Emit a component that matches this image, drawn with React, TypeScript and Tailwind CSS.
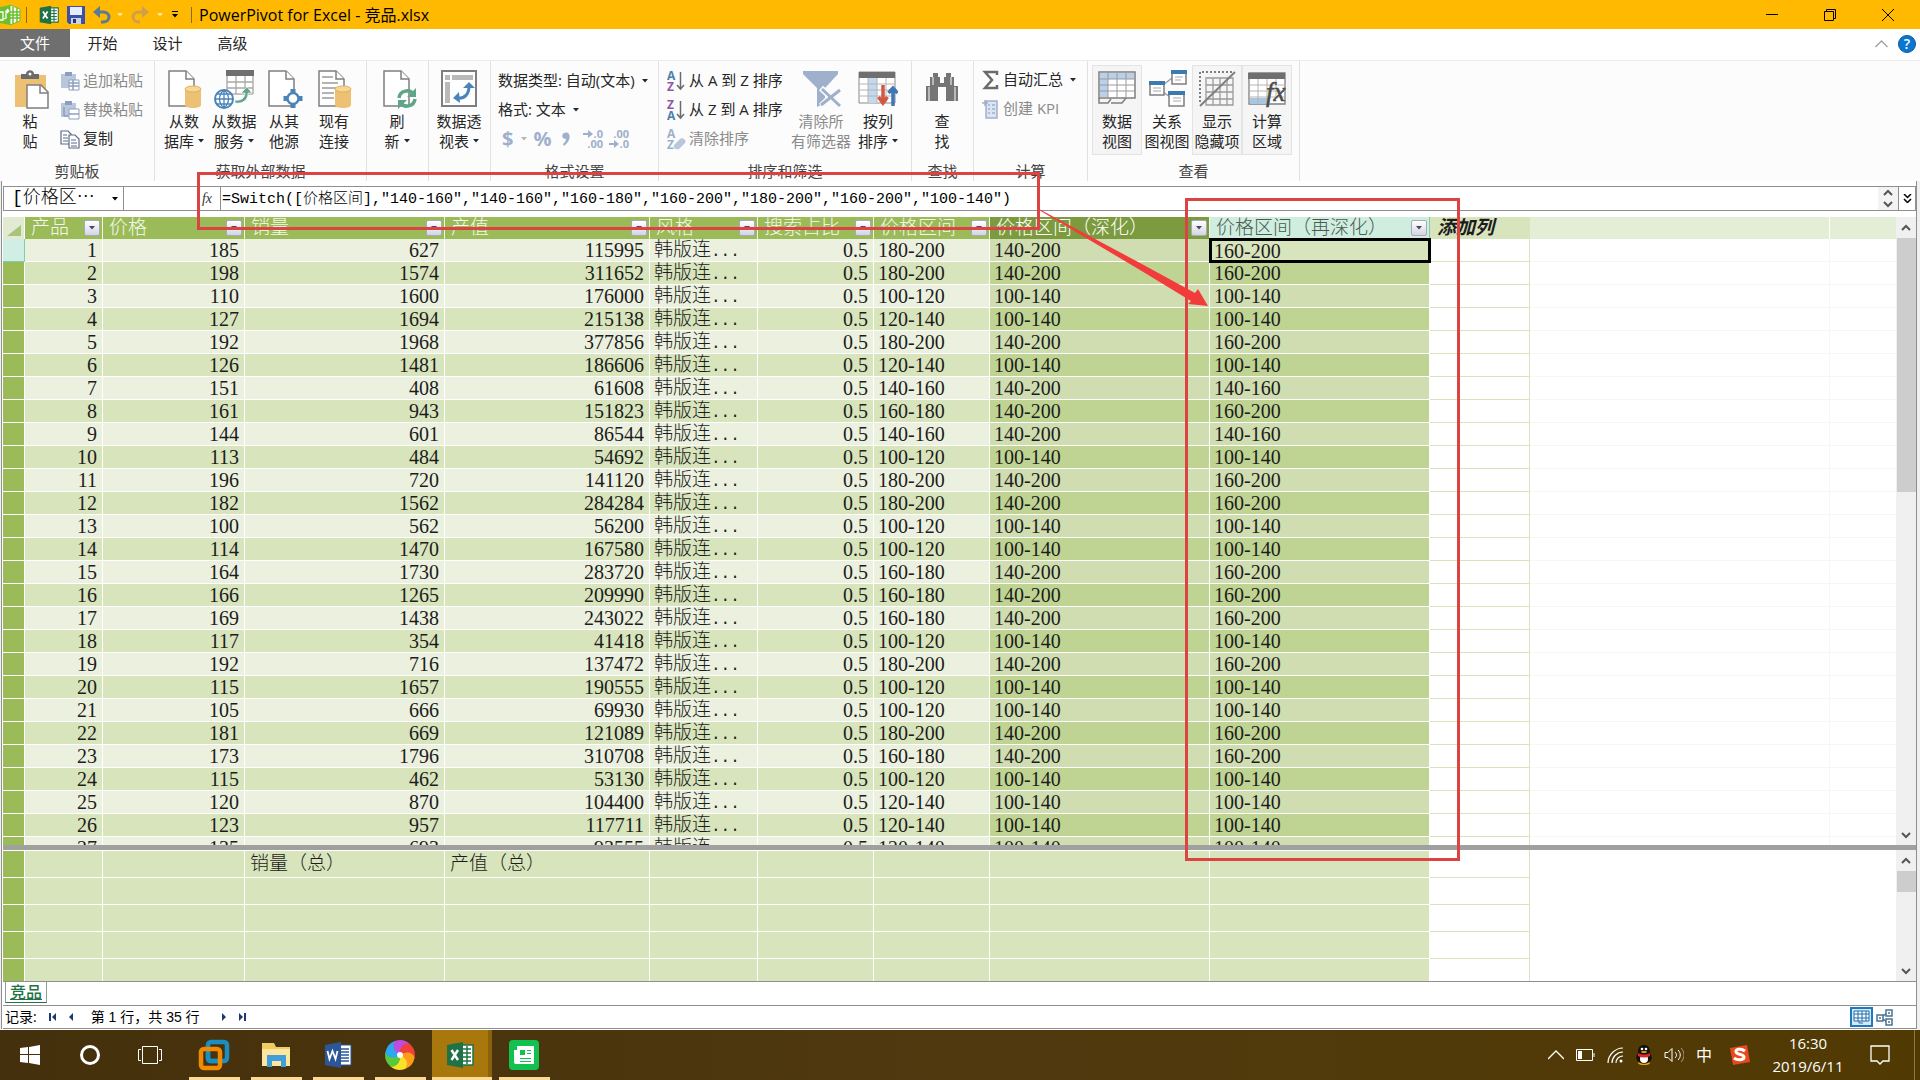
import type { ReactNode } from 'react';
import clsx from 'clsx';

type Row = [number, number, number, number, string, string, string];

// no, price, sales, output, price band, deep band, deeper band
const ROWS: Row[] = [
  [1, 185, 627, 115995, '180-200', '140-200', '160-200'],
  [2, 198, 1574, 311652, '180-200', '140-200', '160-200'],
  [3, 110, 1600, 176000, '100-120', '100-140', '100-140'],
  [4, 127, 1694, 215138, '120-140', '100-140', '100-140'],
  [5, 192, 1968, 377856, '180-200', '140-200', '160-200'],
  [6, 126, 1481, 186606, '120-140', '100-140', '100-140'],
  [7, 151, 408, 61608, '140-160', '140-200', '140-160'],
  [8, 161, 943, 151823, '160-180', '140-200', '160-200'],
  [9, 144, 601, 86544, '140-160', '140-200', '140-160'],
  [10, 113, 484, 54692, '100-120', '100-140', '100-140'],
  [11, 196, 720, 141120, '180-200', '140-200', '160-200'],
  [12, 182, 1562, 284284, '180-200', '140-200', '160-200'],
  [13, 100, 562, 56200, '100-120', '100-140', '100-140'],
  [14, 114, 1470, 167580, '100-120', '100-140', '100-140'],
  [15, 164, 1730, 283720, '160-180', '140-200', '160-200'],
  [16, 166, 1265, 209990, '160-180', '140-200', '160-200'],
  [17, 169, 1438, 243022, '160-180', '140-200', '160-200'],
  [18, 117, 354, 41418, '100-120', '100-140', '100-140'],
  [19, 192, 716, 137472, '180-200', '140-200', '160-200'],
  [20, 115, 1657, 190555, '100-120', '100-140', '100-140'],
  [21, 105, 666, 69930, '100-120', '100-140', '100-140'],
  [22, 181, 669, 121089, '180-200', '140-200', '160-200'],
  [23, 173, 1796, 310708, '160-180', '140-200', '160-200'],
  [24, 115, 462, 53130, '100-120', '100-140', '100-140'],
  [25, 120, 870, 104400, '120-140', '100-140', '100-140'],
  [26, 123, 957, 117711, '120-140', '100-140', '100-140'],
  [27, 135, 693, 93555, '120-140', '100-140', '100-140'],
];

const HEADERS = ['产品', '价格', '销量', '产值', '风格', '搜索占比', '价格区间', '价格区间（深化）', '价格区间（再深化）'];

const FORMULA = '=Switch([价格区间],"140-160","140-160","160-180","160-200","180-200","160-200","100-140")';

const UI_FONT = "font-['Open_Sans','Noto_Sans_CJK_SC',sans-serif]";
const GRID_FONT = "font-['Liberation_Serif','Noto_Sans_CJK_SC',serif]";
const MONO_FONT = "font-['Liberation_Mono','Noto_Sans_CJK_SC',monospace]";

function Columns() {
  return (
    <colgroup>
      <col className="w-[22px]" />
      <col className="w-[78px]" />
      <col className="w-[142px]" />
      <col className="w-[200px]" />
      <col className="w-[205px]" />
      <col className="w-[108px]" />
      <col className="w-[116px]" />
      <col className="w-[116px]" />
      <col className="w-[220px]" />
      <col className="w-[220px]" />
      <col className="w-[100px]" />
      <col className="w-[300px]" />
      <col />
    </colgroup>
  );
}

/* ---------- small glyphs ---------- */

function Caret({ className = 'text-gray-800' }: { className?: string }) {
  return (
    <svg width="6" height="4" viewBox="0 0 6 4" className={clsx('inline-block shrink-0', className)}>
      <path d="M0 0h6L3 3.5z" fill="currentColor" />
    </svg>
  );
}

function Chevron({ down = false, size = 10 }: { down?: boolean; size?: number }) {
  return (
    <svg width={size} height={size} viewBox="0 0 10 10" fill="none" stroke="#555" strokeWidth="2">
      <path d={down ? 'M1 3l4 4 4-4' : 'M1 7l4-4 4 4'} />
    </svg>
  );
}

function PageShape({ x = 4 }: { x?: number }) {
  return (
    <g transform={`translate(${x} 0)`} fill="#fff" stroke="#7f7f7f" strokeWidth="1.5">
      <path d="M1 1h17l8 8v27H1z" />
      <path d="M18 1v8h8" />
    </g>
  );
}

function Cylinder() {
  return (
    <g>
      <path d="M21 19v16c0 4 16 4 16 0V19z" fill="#edc173" />
      <ellipse cx="29" cy="19" rx="8" ry="3" fill="#f5d798" stroke="#e3b05a" />
    </g>
  );
}

function BigIcon({ children }: { children: ReactNode }) {
  return (
    <svg width="40" height="40" viewBox="0 0 40 40" fill="none">
      {children}
    </svg>
  );
}

const pasteIcon = (
  <BigIcon>
    <path d="M5 5h31v32H5z" fill="#edc173" />
    <path d="M11 9V4h5c0-5 8-5 8 0h5v5z" fill="#6b6b6b" />
    <circle cx="20" cy="4" r="1.5" fill="#fff" />
    <path d="M17 15h14l7 7v16H17z" fill="#fff" stroke="#7f7f7f" strokeWidth="1.5" />
    <path d="M30 15v8h8" stroke="#7f7f7f" strokeWidth="1.5" />
  </BigIcon>
);

const fromDbIcon = (
  <BigIcon>
    <PageShape />
    <Cylinder />
  </BigIcon>
);

const fromServiceIcon = (
  <BigIcon>
    <path d="M13 1h26v23H13z" fill="#fff" stroke="#8a8a8a" />
    <path d="M12 0h28v6H12z" fill="#6f6f6f" />
    <path d="M13 12h26M13 18h26M22 6v18M31 6v18" stroke="#a9a9a9" strokeWidth="1.3" />
    <circle cx="10" cy="29" r="9" fill="#fff" stroke="#4b84b8" strokeWidth="2" />
    <path d="M1 29h18M10 20v18M3 24h14M3 34h14M10 20c-6 5-6 13 0 18M10 20c6 5 6 13 0 18" stroke="#4b84b8" strokeWidth="1.3" />
    <path d="M21 30c6 1 10-2 10-7h-4l6-6 5 6h-4c0 7-5 11-13 10z" fill="#5fa587" stroke="#fff" strokeWidth=".6" />
  </BigIcon>
);

const fromOtherIcon = (
  <BigIcon>
    <PageShape />
    <path d="M29 19v19M19.500 28.500h19" stroke="#4b84b8" strokeWidth="5" />
    <circle cx="29" cy="28.500" r="5.500" fill="#fff" stroke="#4b84b8" strokeWidth="2.500" />
  </BigIcon>
);

const existingIcon = (
  <BigIcon>
    <PageShape />
    <path d="M8 7h11M8 13h16M8 18h14M8 23h12M8 28h12" stroke="#9b9b9b" strokeWidth="1.500" />
    <Cylinder />
  </BigIcon>
);

const refreshIcon = (
  <BigIcon>
    <PageShape x={6} />
    <path d="M22 28c1-8 11-9 14-4M38 29c-1 8-11 9-14 4" stroke="#5fa587" strokeWidth="3.500" />
    <path d="M39 18v9h-9zM21 39v-9h9z" fill="#5fa587" />
  </BigIcon>
);

const pivotIcon = (
  <BigIcon>
    <path d="M3 1h34v35H3z" fill="#fff" stroke="#7f7f7f" strokeWidth="2" />
    <path d="M6 5h5v5H6zM13 5h21v5H13zM6 12h5v21H6z" fill="#b9b9b9" />
    <path d="M18 28c8 1 12-4 12-12" stroke="#4b84b8" strokeWidth="3" />
    <path d="M24 18l6-6 6 6zM20 22l-6 6 7 5z" fill="#4b84b8" />
  </BigIcon>
);

const clearFilterIcon = (
  <BigIcon>
    <path d="M2 1h35v3L24 18v15l-8 4V18L2 4z" fill="#9fb0cd" />
    <path d="M20 18l18 17M38 19L20 36" stroke="#fcfcfc" strokeWidth="6" />
    <path d="M21 19l18 17M39 20L20 35" stroke="#9fb0cd" strokeWidth="3" />
  </BigIcon>
);

const sortColumnIcon = (
  <BigIcon>
    <path d="M1 2h36v31H1z" fill="#fff" stroke="#8a8a8a" />
    <path d="M10 8h9v25h-9z" fill="#c5d9ee" />
    <path d="M1 2h36v6H1z" fill="#6f6f6f" />
    <path d="M1 14h36M1 20h36M1 26h36M10 8v25M19 8v25M28 8v25" stroke="#b4b4b4" />
    <path d="M25 15v16M20.500 27l4.500 6 4.500-6" stroke="#d35640" strokeWidth="3.500" />
    <path d="M35 36V20M30.500 23l4.500-5 4.500 5" stroke="#3f77b5" strokeWidth="3.500" />
  </BigIcon>
);

const findIcon = (
  <BigIcon>
    <path d="M11 3h5v4h2v6h4V7h2V3h5v4h3v9h4v15H24V17h-8v14H4V16h4V7h3z" fill="#757575" />
    <path d="M7 17v14M11 7v8M33 17v14M29 7v8" stroke="#fff" />
  </BigIcon>
);

const dataViewIcon = (
  <BigIcon>
    <path d="M2 2h36v26H2z" fill="#fff" stroke="#7f7f7f" strokeWidth="1.500" />
    <path d="M3 3h34v6H3zM3 9h8v18H3z" fill="#b9cfea" />
    <path d="M2 9h36M2 15h36M2 21h36M11 2v26M20 2v26M29 2v26" stroke="#9b9b9b" />
    <path d="M2 28v5h9l3-4M14 33h11l4-5" stroke="#7f7f7f" strokeWidth="1.500" />
  </BigIcon>
);

const diagramIcon = (
  <BigIcon>
    <path d="M16 15l9-7M16 22l7 5" stroke="#9b9b9b" strokeWidth="1.500" />
    <path d="M3 12h14v13H3zM25 1h14v13H25zM22 22h15v14H22z" fill="#fff" stroke="#7f7f7f" strokeWidth="1.500" />
    <path d="M2 11h16v4H2zM24 0h16v4H24zM21 21h17v4H21z" fill="#3d7ab0" />
    <path d="M6 18h8M6 21h8M28 7h8M28 10h6M26 28h8M26 31h8" stroke="#a9a9a9" />
  </BigIcon>
);

const hiddenIcon = (
  <BigIcon>
    <path d="M3 32V2h34" stroke="#7f7f7f" strokeWidth="2" strokeDasharray="2 2" />
    <path d="M9 8h27v27H9zM9 15h27M9 22h27M9 29h27M16 8v27M23 8v27M30 8v27" stroke="#9b9b9b" strokeWidth="1.300" />
    <path d="M3 36L38 2" stroke="#7f7f7f" strokeWidth="2" />
  </BigIcon>
);

const calcAreaIcon = (
  <BigIcon>
    <path d="M2 3h36v31H2z" fill="#fff" stroke="#7f7f7f" strokeWidth="1.300" />
    <path d="M3 28h20v6H3z" fill="#a8c6e2" />
    <path d="M1 3h37v6H1z" fill="#6f6f6f" />
    <path d="M2 15h36M2 21h36M2 27h36M11 9v25M20 9v25M29 9v18" stroke="#b4b4b4" />
    <text x="19" y="31" fontSize="27" fontStyle="italic" fontFamily="Liberation Serif" fill="#4b4b4b" stroke="#4b4b4b" strokeWidth=".5">fx</text>
  </BigIcon>
);

function SmallPaste({ replace = false }: { replace?: boolean }) {
  return (
    <svg width="20" height="20" viewBox="0 0 20 20" fill="none">
      <path d="M1 3h15v14H1z" fill="#b9c6dc" />
      <path d="M5 1h7v4H5z" fill="#8e9fbd" />
      <path d="M9 9h10v10H9z" fill="#fff" stroke="#8e9fbd" />
      <path d={replace ? 'M4 7v9M4 16h4M9 14h10' : 'M9 12h10M9 15h10M13 9v10'} stroke="#8e9fbd" strokeWidth="1.500" />
    </svg>
  );
}

function CopyIcon() {
  return (
    <svg width="20" height="20" viewBox="0 0 20 20" fill="#fff" stroke="#5b6b85" strokeWidth="1.200">
      <path d="M1 2h7l3 3v10H1z" />
      <path d="M9 6h6l4 4v9H9z" />
      <path d="M3 6h4M3 9h5M3 12h5M11 11h5M11 14h6M11 17h6" />
    </svg>
  );
}

function SortIcon({ top, bottom, muted = false }: { top: string; bottom: string; muted?: boolean }) {
  return (
    <svg width="20" height="22" viewBox="0 0 20 22" fill="none" className="overflow-visible">
      <g fontFamily="Open Sans" fontSize="12" fontWeight="700">
        <text x="1" y="10" fill={muted ? '#9fb0cd' : top === 'A' ? '#4b7fae' : '#8d5aa5'}>{top}</text>
        <text x="1" y="21" fill={muted ? '#9fb0cd' : bottom === 'A' ? '#4b7fae' : '#8d5aa5'}>{bottom}</text>
      </g>
      {muted ? (
        <path d="M8 17l6-6c2-2 7 1 5 4l-6 6c-3 1-6-1-5-4z" fill="#b9c6dc" />
      ) : (
        <path d="M14.500 2v16M11 15l3.500 4 3.500-4" stroke="#6b6b6b" strokeWidth="1.500" />
      )}
    </svg>
  );
}

/* ---------- ribbon ---------- */

interface BigButtonProps {
  icon: ReactNode;
  lines: [string, string];
  caret?: boolean;
  pressed?: boolean;
  muted?: boolean;
  width?: string;
}

function BigButton({ icon, lines, caret, pressed, muted, width = 'w-[50px]' }: BigButtonProps) {
  return (
    <button
      type="button"
      className={clsx(
        'flex h-[90px] shrink-0 flex-col items-center border pt-1 whitespace-nowrap',
        width,
        pressed ? 'border-[#e3e3e3] bg-[#f5f5f5]' : 'border-transparent',
        muted ? 'text-[#8a8a8a]' : 'text-[#262626]'
      )}
    >
      {icon}
      <span className="mt-px leading-5">{lines[0]}</span>
      <span className="flex items-center gap-1 leading-5">
        {lines[1]}
        {caret && <Caret />}
      </span>
    </button>
  );
}

function Group({ label, width, inset, children }: { label: string; width: string; inset?: boolean; children: ReactNode }) {
  return (
    <section className={clsx('flex shrink-0 flex-col border-r border-[#e1e1e1] pt-1', width)}>
      <div className={clsx('flex h-[96px]', inset && 'pl-1')}>{children}</div>
      <div className="text-center leading-5 text-[#444]">{label}</div>
    </section>
  );
}

function SmallButton({ icon, text, muted, caret }: { icon?: ReactNode; text: string; muted?: boolean; caret?: boolean }) {
  return (
    <button type="button" className={clsx('flex h-[29px] items-center gap-[3px] whitespace-nowrap', muted ? 'text-[#8a8a8a]' : 'text-[#262626]')}>
      {icon}
      {text}
      {caret && <Caret className="ml-1 text-gray-800" />}
    </button>
  );
}

function DecimalIcon({ increase = false }: { increase?: boolean }) {
  return (
    <svg width="20" height="20" viewBox="0 0 20 20" fill="#9fb0cd" fontSize="11" fontFamily="Open Sans" fontWeight="700" className="overflow-visible">
      <text x="20" y="9" textAnchor="end">{increase ? '.00' : '.0'}</text>
      <text x="20" y="19" textAnchor="end">{increase ? '.0' : '.00'}</text>
      <path d={increase ? 'M0 14h5v-3l5 4-5 4v-3H0z' : 'M0 4h5V1l5 4-5 4V6H0z'} />
    </svg>
  );
}

function Ribbon() {
  return (
    <div className="flex h-[121px] overflow-hidden border-t border-[#ececec] bg-[#fcfcfc] text-[15px]">
      <Group label="剪贴板" width="w-[155px]">
        <BigButton icon={pasteIcon} lines={['粘', '贴']} width="w-[60px]" />
        <div className="flex flex-col pt-px">
          <SmallButton icon={<SmallPaste />} text="追加粘贴" muted />
          <SmallButton icon={<SmallPaste replace />} text="替换粘贴" muted />
          <SmallButton icon={<CopyIcon />} text="复制" />
        </div>
      </Group>
      <Group label="获取外部数据" width="w-[212px]" inset>
        <BigButton icon={fromDbIcon} lines={['从数', '据库']} caret />
        <BigButton icon={fromServiceIcon} lines={['从数据', '服务']} caret />
        <BigButton icon={fromOtherIcon} lines={['从其', '他源']} />
        <BigButton icon={existingIcon} lines={['现有', '连接']} />
      </Group>
      <Group label="" width="w-[62px]">
        <BigButton icon={refreshIcon} lines={['刷', '新']} caret width="w-[60px]" />
      </Group>
      <Group label="" width="w-[62px]">
        <BigButton icon={pivotIcon} lines={['数据透', '视表']} caret width="w-[60px]" />
      </Group>
      <Group label="格式设置" width="w-[168px]">
        <div className="flex flex-col items-start pt-px pl-[7px]">
          <SmallButton text="数据类型: 自动(文本)" caret />
          <SmallButton text="格式: 文本" caret />
          <div className="flex h-[29px] items-center gap-[6px] pl-1 font-bold text-[#9fb0cd]">
            <button type="button" aria-label="货币" className="flex items-center gap-2 text-xl leading-6">
              $<Caret className="text-[#b5b5b5]" />
            </button>
            <button type="button" aria-label="百分比" className="text-xl leading-6">%</button>
            <button type="button" aria-label="千位分隔" className="w-5">
              <svg width="20" height="20" viewBox="0 0 20 20">
                <path d="M7 4c6-3 9 6 0 13l-1-2c2-2 3-3 3-5-4 0-5-4-2-6z" fill="#9fb0cd" />
              </svg>
            </button>
            <button type="button" aria-label="增加小数位数" className="w-5">
              <DecimalIcon />
            </button>
            <button type="button" aria-label="减少小数位数" className="w-5">
              <DecimalIcon increase />
            </button>
          </div>
        </div>
      </Group>
      <Group label="排序和筛选" width="w-[253px]">
        <div className="flex w-[130px] shrink-0 flex-col items-start pt-px pl-[7px]">
          <SmallButton icon={<SortIcon top="A" bottom="Z" />} text="从 A 到 Z 排序" />
          <SmallButton icon={<SortIcon top="Z" bottom="A" />} text="从 Z 到 A 排序" />
          <SmallButton icon={<SortIcon top="A" bottom="Z" muted />} text="清除排序" muted />
        </div>
        <BigButton icon={clearFilterIcon} lines={['清除所', '有筛选器']} muted width="w-[64px]" />
        <BigButton icon={sortColumnIcon} lines={['按列', '排序']} caret />
      </Group>
      <Group label="查找" width="w-[62px]">
        <BigButton icon={findIcon} lines={['查', '找']} width="w-[60px]" />
      </Group>
      <Group label="计算" width="w-[114px]">
        <div className="flex flex-col items-start pl-2">
          <SmallButton
            icon={
              <svg width="18" height="20" viewBox="0 0 18 20" fill="none" stroke="#6b6b6b" strokeWidth="2.500">
                <path d="M15 5V2H3l7 8-7 8h12v-3" />
              </svg>
            }
            text="自动汇总"
            caret
          />
          <SmallButton
            icon={
              <svg width="18" height="20" viewBox="0 0 18 20" fill="none" stroke="#9fb0cd" strokeWidth="1.500">
                <path d="M4 2h11v17H4z" fill="#dbe4f1" />
                <path d="M10 6h3M10 10h3M10 14h3M6 6h2M6 10h2M6 14h2M0 4h6M3 1v6" />
              </svg>
            }
            text="创建 KPI"
            muted
          />
        </div>
      </Group>
      <Group label="查看" width="w-[212px]" inset>
        <BigButton icon={dataViewIcon} lines={['数据', '视图']} pressed />
        <BigButton icon={diagramIcon} lines={['关系', '图视图']} />
        <BigButton icon={hiddenIcon} lines={['显示', '隐藏项']} pressed />
        <BigButton icon={calcAreaIcon} lines={['计算', '区域']} pressed />
      </Group>
    </div>
  );
}

/* ---------- title bar and tabs ---------- */

function ExcelMark({ size }: { size: number }) {
  return (
    <svg width={size} height={size} viewBox="0 0 28 28">
      <path d="M14 4h13v20H14z" fill="#fff" stroke="#1f7246" strokeWidth="1.500" />
      <path d="M17 8h8M17 12h8M17 16h8M17 20h8M21 5v18" stroke="#1f7246" strokeWidth="1.500" />
      <path d="M1 4l16-3v26L1 24z" fill="#1f7246" />
      <path d="M5.500 9l6.500 10M12 9L5.500 19" stroke="#fff" strokeWidth="2.400" />
    </svg>
  );
}

function TitleBar() {
  return (
    <header className="flex h-[29px] shrink-0 items-center bg-[#ffb900] text-black">
      <svg width="21" height="22" viewBox="0 0 21 22" fill="none">
        <path d="M0 3l10-2v20L0 19z" fill="#6cbf2e" />
        <path d="M10 1l10 4v12l-10 4z" fill="#fff" stroke="#6cbf2e" />
        <path d="M10 8h10M10 11h10M10 14h10M13 3v17M17 4v14" stroke="#6cbf2e" strokeWidth="1.500" />
        <path d="M0 8h3v8H0M9 7H6v7l-2 1M9 7L7 5M9 7L7 9" stroke="#fff" strokeWidth="1.300" />
      </svg>
      <span className="ml-[5px] h-4 w-px bg-[#8a6a1c]" />
      <div className="ml-3 flex items-center">
        <ExcelMark size={20} />
        <button type="button" aria-label="保存" className="ml-2">
          <svg width="18" height="18" viewBox="0 0 18 18">
            <path d="M0 0h18v18H2l-2-2z" fill="#3c50a8" />
            <path d="M3 1h12v8H3z" fill="#e6edf9" />
            <path d="M4 12h10v6H4z" fill="#cbd2e2" />
            <path d="M6 13h3v4H6z" fill="#26346f" />
          </svg>
        </button>
        <button type="button" aria-label="撤消" className="ml-2 flex items-center gap-[6px]">
          <svg width="18" height="18" viewBox="0 0 18 18" fill="none">
            <path d="M3 6h7c8 0 8 10 0 10H8" stroke="#5b7a94" strokeWidth="3" />
            <path d="M0 6l7-6v12z" fill="#5b7a94" />
          </svg>
          <Caret className="text-[#ffe7a3]" />
        </button>
        <button type="button" aria-label="恢复" className="ml-2 flex items-center gap-2">
          <svg width="18" height="18" viewBox="0 0 18 18" fill="none">
            <path d="M15 6H8c-8 0-8 10 0 10h1" stroke="#cfa04a" strokeWidth="3" />
            <path d="M18 6l-7-6v12z" fill="#cfa04a" />
          </svg>
          <Caret className="text-[#ffe7a3]" />
        </button>
        <button type="button" aria-label="自定义快速访问工具栏" className="ml-1 flex w-4 flex-col items-center gap-[2px]">
          <span className="h-px w-[6px] bg-black" />
          <Caret className="text-black" />
        </button>
      </div>
      <span className="ml-2 h-4 w-px bg-[#8a6a1c]" />
      <h1 className="ml-[7px] text-base leading-6">PowerPivot for Excel - 竞品.xlsx</h1>
      <div className="ml-auto flex pr-[3px]">
        <button type="button" aria-label="最小化" className="flex h-7 w-[58px] items-center justify-center">
          <span className="h-px w-3 bg-black" />
        </button>
        <button type="button" aria-label="还原" className="flex h-7 w-[58px] items-center justify-center">
          <svg width="12" height="12" viewBox="0 0 12 12" fill="none" stroke="#000">
            <path d="M.5 2.500h9v9h-9zM2.500 2.500v-2h9v9h-2" />
          </svg>
        </button>
        <button type="button" aria-label="关闭" className="flex h-7 w-[58px] items-center justify-center">
          <svg width="12" height="12" viewBox="0 0 12 12" stroke="#000">
            <path d="M0 0l12 12M12 0L0 12" />
          </svg>
        </button>
      </div>
    </header>
  );
}

function TabBar() {
  return (
    <nav className="flex h-[31px] shrink-0 items-start bg-white text-[15px] leading-7 text-[#262626]">
      <button type="button" className="h-7 w-[70px] bg-[#6f6f6f] text-white">文件</button>
      {['开始', '设计', '高级'].map((tab) => (
        <button key={tab} type="button" className="h-8 w-[65px] pb-1">{tab}</button>
      ))}
      <div className="mt-[6px] ml-auto flex items-center gap-[10px] pr-1">
        <svg width="13" height="8" viewBox="0 0 13 8" fill="none" stroke="#a0a0a0" strokeWidth="1.300">
          <path d="M.5 7l6-6 6 6" />
        </svg>
        <button type="button" aria-label="帮助" className="size-[18px] rounded-full border border-[#0a5aa6] bg-[#0b76d1] text-sm leading-4 font-semibold text-white">
          ?
        </button>
      </div>
    </nav>
  );
}

function FormulaBar() {
  return (
    <div className="mt-[5px] flex h-[25px] shrink-0 items-stretch border border-[#8f8f8f] bg-white text-[15px]">
      <select
        aria-label="名称"
        className={clsx('w-[120px] appearance-none border-r border-[#8f8f8f] bg-white pl-2 text-[18px] leading-[23px] font-light', MONO_FONT)}
      >
        <option>[价格区⋯</option>
      </select>
      <span className="-ml-3 flex items-center">
        <Caret className="text-black" />
      </span>
      <span className="ml-[6px] flex w-[97px] items-center justify-end border-r border-[#8f8f8f] pr-2 font-['Liberation_Serif',serif] text-sm text-[#333] italic">
        fx
      </span>
      <input
        aria-label="公式"
        defaultValue={FORMULA}
        spellCheck={false}
        className={clsx('min-w-0 flex-1 pt-[2px] pl-px leading-[21px] font-light text-black outline-none', MONO_FONT)}
      />
      <div className="flex w-5 flex-col items-center justify-between bg-[#f3f3f3] py-px">
        <Chevron />
        <Chevron down />
      </div>
      <button type="button" aria-label="展开" className="flex w-[17px] flex-col items-center justify-center border-l border-[#8f8f8f]">
        <svg width="9" height="9" viewBox="0 0 9 9" fill="none" stroke="#000" strokeWidth="1.500">
          <path d="M1 0l3.500 3.500L8 0M1 5l3.500 3.500L8 5" />
        </svg>
      </button>
    </div>
  );
}

/* ---------- grid ---------- */

function ScrollBar({ thumb }: { thumb: string }) {
  return (
    <div className="flex w-5 shrink-0 flex-col items-center bg-[#f0f0f0]">
      <div className="flex h-[21px] shrink-0 items-center"><Chevron /></div>
      <div className={clsx('w-[19px] bg-[#cdcdcd]', thumb)} />
      <div className="mt-auto flex h-[21px] shrink-0 items-center"><Chevron down /></div>
    </div>
  );
}

function HeaderCell({ title, index }: { title: string; index: number }) {
  return (
    <th
      className={clsx(
        'h-[22px] border-r p-0 text-left font-light',
        index === 7 && 'border-[#f1f6e8] bg-[#7c9b3e] text-white',
        index === 8 && 'border-[#7ccfa6] bg-[#d0eee0] text-[#4a5a50]',
        index < 7 && 'border-[#f1f6e8] bg-[#9bbb59] text-[#f4f9ea]'
      )}
    >
      <div className="flex h-[22px] items-center justify-between pr-[2px] pl-[6px]">
        <span className="text-[19px] leading-[22px]">{title}</span>
        <button
          type="button"
          aria-label={`筛选 ${title}`}
          className="flex size-4 shrink-0 items-center justify-center rounded-xs border border-[#a9a9bd] bg-linear-to-b from-white to-[#d5d5e0]"
        >
          <Caret className="text-[#474769]" />
        </button>
      </div>
    </th>
  );
}

function DataGrid() {
  return (
    <div className="mt-[6px] flex min-h-0 flex-1">
      <div className="min-w-0 flex-1 overflow-hidden">
        <table className={clsx('w-full table-fixed border-separate border-spacing-0 text-[20px] text-[#1c1c1c]', GRID_FONT)}>
          <Columns />
          <thead>
            <tr className="h-[22px]">
              <th className="border-r border-white bg-[#e3ead3] p-0" aria-label="全选">
                <svg width="21" height="21" viewBox="0 0 21 21">
                  <path d="M18 7v11H4z" fill="#a9c37a" />
                </svg>
              </th>
              {HEADERS.map((title, i) => (
                <HeaderCell key={title} title={title} index={i} />
              ))}
              <th className="bg-[#d8e4bc] p-0 pl-[7px] text-left text-[19px] leading-[22px] font-bold italic">添加列</th>
              <th className="border-r border-white bg-[#e4edd5] p-0" />
              <th className="bg-[#e4edd5] p-0" />
            </tr>
          </thead>
          <tbody>
            {ROWS.map((row, r) => {
              const [no, price, sales, output, band, deep, deeper] = row;
              const even = r % 2 === 1;
              const plain = clsx('h-[23px] border-r border-b border-white p-0 leading-[22px] whitespace-nowrap', even ? 'bg-[#d8e4bc]' : 'bg-[#ebf1de]');
              const calc = clsx('border-r border-b border-white p-0 pl-1 leading-[22px]', even ? 'bg-[#bfd492]' : 'bg-[#cfddb0]');
              return (
                <tr key={no} className="h-[23px]">
                  <td
                    className={clsx(
                      'border-r border-b p-0',
                      r === 0 ? 'border-[#7ccfa6] bg-[#d0eee3]' : 'border-white bg-[#9bbb59]'
                    )}
                  />
                  {[no, price, sales, output].map((value, i) => (
                    <td key={i} className={clsx(plain, 'pr-[5px] text-right')}>{value}</td>
                  ))}
                  <td className={clsx(plain, 'pl-1 text-[19px] font-light')}>
                    韩版连<span className={clsx('text-base leading-none', MONO_FONT)}>...</span>
                  </td>
                  <td className={clsx(plain, 'pr-[5px] text-right')}>0.5</td>
                  <td className={clsx(plain, 'pl-1')}>{band}</td>
                  <td className={calc}>{deep}</td>
                  <td
                    className={
                      r === 0
                        ? 'bg-[#d8e4bc] p-0 pl-1 leading-[22px] outline-[3px] -outline-offset-2 outline-black'
                        : calc
                    }
                  >
                    {deeper}
                  </td>
                  <td className="border-r border-b border-[#d8e4bc] bg-white p-0" />
                  <td className="border-r border-b border-[#f5f7f1] bg-white p-0" />
                  <td className="border-b border-[#f5f7f1] bg-white p-0" />
                </tr>
              );
            })}
          </tbody>
        </table>
      </div>
      <ScrollBar thumb="h-[254px]" />
    </div>
  );
}

function CalculationArea() {
  const totals: Record<number, string> = { 2: '销量（总）', 3: '产值（总）' };
  return (
    <div className="flex h-[131px] shrink-0">
      <div className="min-w-0 flex-1 overflow-hidden">
        <table className={clsx('w-full table-fixed border-separate border-spacing-0 text-[19px] text-[#1c1c1c]', GRID_FONT)}>
          <Columns />
          <tbody>
            {[0, 1, 2, 3, 4].map((r) => (
              <tr key={r} className="h-[27px]">
                <td className="border-t border-r border-white bg-[#9bbb59] p-0" />
                {HEADERS.map((title, i) => (
                  <td key={title} className="h-[27px] border-t border-r border-white bg-[#d8e4bc] p-0 pl-[5px] text-left leading-[26px] font-light">
                    {r === 0 ? totals[i] : ''}
                  </td>
                ))}
                <td className={clsx('border-r border-[#d8e4bc] p-0', r > 0 && 'border-t')} />
                <td />
                <td />
              </tr>
            ))}
          </tbody>
        </table>
      </div>
      <ScrollBar thumb="h-[21px]" />
    </div>
  );
}

function StatusArea() {
  return (
    <footer className="shrink-0 bg-white text-sm">
      <div className="h-6 border-t border-[#8f8f8f] pl-[2px]">
        <button type="button" className="block h-[21px] border border-t-0 border-[#8f9f97] border-b-[#1f7246] px-1 text-base leading-[21px] font-medium text-[#1f7246] underline">
          竞品
        </button>
      </div>
      <div className="flex h-6 items-center border-y border-[#8f8f8f] pl-[2px] text-black">
        <span>记录:</span>
        <div className="ml-3 flex gap-[10px] text-[#1c3a70]">
          <button type="button" aria-label="第一条">
            <svg width="8" height="8" viewBox="0 0 8 8" fill="currentColor"><path d="M0 0h2v8H0zM7 0v8L3 4z" /></svg>
          </button>
          <button type="button" aria-label="上一条">
            <svg width="8" height="8" viewBox="0 0 8 8" fill="currentColor"><path d="M6 0v8L2 4z" /></svg>
          </button>
        </div>
        <span className="mx-4 whitespace-nowrap font-['Liberation_Sans','Noto_Sans_CJK_SC',sans-serif]">第 1 行，共 35 行</span>
        <div className="ml-1 flex gap-[10px] text-[#1c3a70]">
          <button type="button" aria-label="下一条">
            <svg width="8" height="8" viewBox="0 0 8 8" fill="currentColor"><path d="M2 0v8l4-4z" /></svg>
          </button>
          <button type="button" aria-label="最后一条">
            <svg width="8" height="8" viewBox="0 0 8 8" fill="currentColor"><path d="M6 0h2v8H6zM1 0v8l4-4z" /></svg>
          </button>
        </div>
        <div className="ml-auto flex items-center gap-[3px] pr-[23px]">
          <button type="button" aria-label="数据视图" className="flex h-5 w-[23px] items-center justify-center border-2 border-[#1c7bc0] bg-[#d6e8f5]">
            <svg width="17" height="14" viewBox="0 0 17 14" fill="#fff" stroke="#1c6ca8">
              <path d="M1 1h15v10H1zM1 4h15M1 8h15M5 1v10M9 1v10M13 1v10M6 11v2h4" />
            </svg>
          </button>
          <button type="button" aria-label="关系图视图">
            <svg width="17" height="17" viewBox="0 0 17 17" fill="#fff" stroke="#4a7291" strokeWidth="1.500">
              <path d="M7 7l4-3M7 10l4 3" />
              <path d="M1 6h6v6H1zM10 1h6v6h-6zM10 10h6v6h-6zM3 9h2M12 4h2M12 13h2" />
            </svg>
          </button>
        </div>
      </div>
    </footer>
  );
}

/* ---------- taskbar ---------- */

const taskIcons: { name: string; icon: ReactNode; active?: boolean }[] = [
  {
    name: 'VMware',
    icon: (
      <svg width="32" height="32" viewBox="0 0 32 32" fill="none" strokeWidth="4.500">
        <rect x="10" y="3" width="19" height="19" rx="3" stroke="#1a8fc4" />
        <rect x="3" y="10" width="19" height="19" rx="3" stroke="#f08a00" />
        <path d="M10 13v6c0 2 1 3 3 3h6" stroke="#1a8fc4" />
      </svg>
    ),
  },
  {
    name: '文件资源管理器',
    icon: (
      <svg width="30" height="28" viewBox="0 0 30 28">
        <path d="M1 2h12l2 4h14v18H1z" fill="#f0cd62" />
        <path d="M1 8h28v17H1z" fill="#fde6a0" />
        <path d="M6 14h19v12h-5v-6h-9v6H6z" fill="#3f9fd8" />
      </svg>
    ),
  },
  {
    name: 'Word',
    icon: (
      <svg width="28" height="28" viewBox="0 0 28 28">
        <path d="M14 4h13v20H14z" fill="#fff" stroke="#2b579a" />
        <path d="M17 8h8M17 11h8M17 14h8M17 17h8M17 20h8" stroke="#2b579a" strokeWidth="1.500" />
        <path d="M1 4l16-3v26L1 24z" fill="#2b579a" />
        <path d="M3.500 10l2 8 3-8 3 8 2-8" fill="none" stroke="#fff" strokeWidth="1.800" />
      </svg>
    ),
  },
  {
    name: '浏览器',
    icon: (
      <svg width="32" height="32" viewBox="-16 -16 32 32">
        {['#c14be0', '#f0413c', '#ff9c1a', '#f8e12a', '#57c93b', '#2ca7f0'].map((color, i) => (
          <path key={color} d="M0 0C-7-3-9-10-5-14A15 15 0 0 1 10-11C5-12 0-8 0 0z" fill={color} transform={`rotate(${i * 60})`} />
        ))}
        <circle r="3" fill="#fff" />
      </svg>
    ),
  },
  { name: 'Excel', icon: <ExcelMark size={28} />, active: true },
  {
    name: '阅读',
    icon: (
      <svg width="30" height="30" viewBox="0 0 30 30">
        <rect width="30" height="30" rx="4" fill="#13c14e" />
        <path d="M5 10h3V6h17v18H7c-2 0-2-1-2-3z" fill="#fff" />
        <path d="M11 10h5v5h-5zM18 10h4v1h-4zM18 13h4v1h-4zM11 18h11v1H11zM11 21h11v1H11z" fill="#13c14e" />
      </svg>
    ),
  },
];

function Taskbar() {
  return (
    <div className="flex h-[50px] shrink-0 items-stretch bg-linear-to-r from-[#44300c] via-[#50390f] to-[#513a02] text-white">
      <button type="button" aria-label="开始" className="flex w-[60px] items-center justify-center">
        <svg width="20" height="20" viewBox="0 0 20 20" fill="#fff">
          <path d="M0 3l8-1v7H0zM9 2l11-2v9H9zM0 10h8v8l-8-1zM9 10h11v10L9 18z" />
        </svg>
      </button>
      <button type="button" aria-label="搜索" className="flex w-[60px] items-center justify-center">
        <span className="size-5 rounded-full border-[3px] border-white" />
      </button>
      <button type="button" aria-label="任务视图" className="mr-[3px] flex w-[60px] items-center justify-center">
        <svg width="24" height="18" viewBox="0 0 24 18" fill="none" stroke="#fff">
          <path d="M4.500.5h15v17h-15zM3 3.500H.5v11H3M21 3.500h2.500v11H21" />
        </svg>
      </button>
      {taskIcons.map(({ name, icon, active }) => (
        <button key={name} type="button" aria-label={name} className="flex w-[62px] flex-col items-center">
          <span className={clsx('flex flex-1 items-center justify-center pt-[3px]', active ? 'w-[60px] border-r-4 border-[#8a620c] bg-[#a8780c]' : 'w-[51px]')}>{icon}</span>
          <span className={clsx('h-[3px] bg-[#fbd996]', active ? 'w-[60px]' : 'w-[51px]')} />
        </button>
      ))}
      <div className="ml-auto flex items-center">
        <svg width="16" height="10" viewBox="0 0 16 10" fill="none" stroke="#fff" strokeWidth="1.300">
          <path d="M0 9l8-8 8 8" />
        </svg>
        <svg width="19" height="12" viewBox="0 0 19 12" fill="none" stroke="#fff" className="ml-3">
          <path d="M.5.5h16v11H.5zM18 4v4" />
          <path d="M2 2h4v8H2z" fill="#fff" stroke="none" />
        </svg>
        <svg width="16" height="16" viewBox="0 0 16 16" fill="none" stroke="#fff" strokeWidth="1.200" className="ml-3">
          <path d="M1 16C1 8 8 1 16 1M5 16c0-6 5-11 11-11M9 16c0-4 3-7 7-7" />
          <circle cx="14" cy="14" r="1.500" fill="#fff" stroke="none" />
        </svg>
        <svg width="16" height="20" viewBox="0 0 16 20" className="ml-[13px]">
          <ellipse cx="8" cy="18" rx="6" ry="2" fill="#f2a900" />
          <path d="M8 0c5 0 6 4 6 8 2 3 2 6 1 7-2 5-12 5-14 0-1-2-1-4 1-7 0-4 1-8 6-8z" fill="#111" />
          <ellipse cx="8" cy="14" rx="4" ry="4" fill="#fff" />
          <path d="M2 8c4 2 8 2 12 0v3c-4 2-8 2-12 0z" fill="#e3252b" />
          <circle cx="6" cy="4" r="1.300" fill="#fff" />
          <circle cx="10" cy="4" r="1.300" fill="#fff" />
          <ellipse cx="8" cy="7" rx="3" ry="1" fill="#f2a900" />
        </svg>
        <svg width="20" height="16" viewBox="0 0 20 16" fill="none" stroke="#fff" className="ml-3">
          <path d="M1 5.500h3l4-4v13l-4-4H1zM11 5c2 2 2 4 0 6M14 3c3 3 3 7 0 10" />
          <path d="M17 1c4 4 4 10 0 14" opacity=".5" />
        </svg>
        <span className="ml-3 text-base">中</span>
        <svg width="20" height="20" viewBox="0 0 20 20" className="ml-[18px]">
          <path d="M0 3l17-3 3 17-17 3z" fill="#e8491d" />
          <path d="M15 6C11 3 5 4 6 7s8 2 8 5-6 4-10 1" fill="none" stroke="#fff" strokeWidth="3" />
        </svg>
        <div className="ml-5 w-[76px] text-center text-[15px] leading-[23px]">
          <div>16:30</div>
          <div>2019/6/11</div>
        </div>
        <svg width="20" height="20" viewBox="0 0 20 20" fill="none" stroke="#fff" strokeWidth="1.300" className="ml-6">
          <path d="M1 1h18v15h-6l-3 3-3-3H1z" />
        </svg>
        <span className="mr-[5px] ml-6 h-[50px] w-px bg-[#8a7748]" />
      </div>
    </div>
  );
}

// Red frames round the formula and the new column, joined by an arrow
function Annotations() {
  return (
    <svg className="pointer-events-none absolute top-0 left-0" width="1470" height="870" viewBox="0 0 1470 870" fill="none">
      <rect x="198.500" y="173.500" width="840" height="55" stroke="#dc4444" strokeWidth="3" />
      <rect x="1186.500" y="199.500" width="272" height="660" stroke="#dc4444" strokeWidth="3" />
      <path d="M1039 209L1140 263L1195 293L1198 289L1208 306L1188 304L1191 301L1140 270L1039 210z" fill="#f23c3c" />
    </svg>
  );
}

export default function App() {
  return (
    <div className={clsx('relative flex h-screen flex-col overflow-hidden bg-white', UI_FONT)}>
      <TitleBar />
      <TabBar />
      <Ribbon />
      <main className="flex min-h-0 flex-1 flex-col bg-[#f0f0f0] pr-[3px] pl-px">
        <div className="flex min-h-0 flex-1 flex-col border-x border-[#8f8f8f] bg-white pl-px">
          <FormulaBar />
          <DataGrid />
          <div className="h-[5px] shrink-0 bg-[#a0a0a0]" />
          <CalculationArea />
          <StatusArea />
        </div>
        <div className="h-px shrink-0 bg-white" />
      </main>
      <Taskbar />
      <Annotations />
    </div>
  );
}
